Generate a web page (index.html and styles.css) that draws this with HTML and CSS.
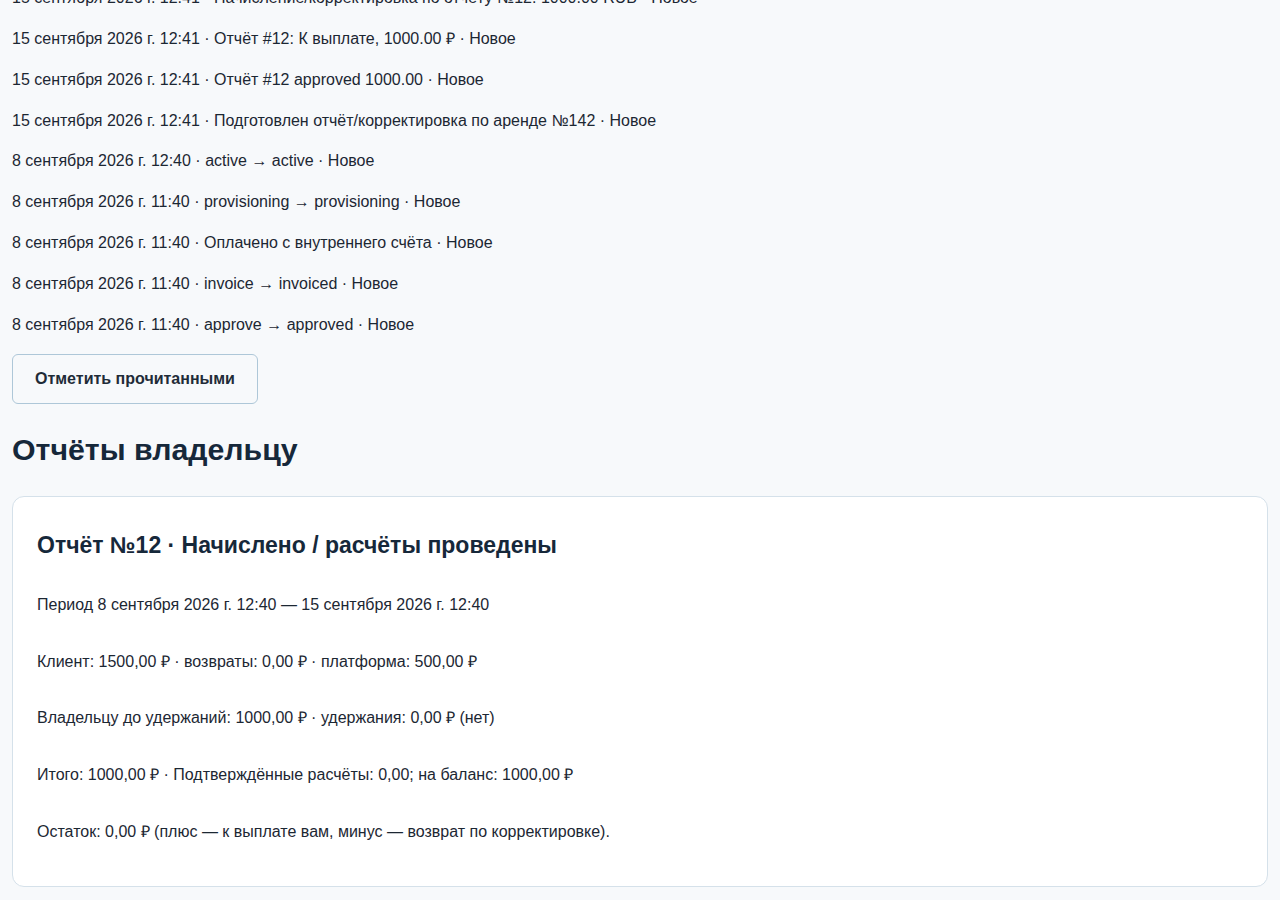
FILE: index.html
```html
<!DOCTYPE html>
<html lang="ru">
<head>
<meta charset="utf-8">
<title>Уведомления и отчёты</title>
<link rel="stylesheet" href="styles.css">
</head>
<body>
<main class="page">
  <section class="notices">
    <p class="notice">15 сентября 2026 г. 12:41 · Начисление/корректировка по отчёту №12: 1000.00 RUB · Новое</p>
    <p class="notice">15 сентября 2026 г. 12:41 · Отчёт #12: К выплате, 1000.00 ₽ · Новое</p>
    <p class="notice">15 сентября 2026 г. 12:41 · Отчёт #12 approved 1000.00 · Новое</p>
    <p class="notice">15 сентября 2026 г. 12:41 · Подготовлен отчёт/корректировка по аренде №142 · Новое</p>
    <p class="notice">8 сентября 2026 г. 12:40 · active → active · Новое</p>
    <p class="notice">8 сентября 2026 г. 11:40 · provisioning → provisioning · Новое</p>
    <p class="notice">8 сентября 2026 г. 11:40 · Оплачено с внутреннего счёта · Новое</p>
    <p class="notice">8 сентября 2026 г. 11:40 · invoice → invoiced · Новое</p>
    <p class="notice">8 сентября 2026 г. 11:40 · approve → approved · Новое</p>
    <button class="btn" type="button">Отметить прочитанными</button>
  </section>
  <h2 class="section-title">Отчёты владельцу</h2>
  <article class="card">
    <h3 class="card-title">Отчёт №12 · Начислено / расчёты проведены</h3>
    <div class="card-body">
      <p class="line">Период 8 сентября 2026 г. 12:40 — 15 сентября 2026 г. 12:40</p>
      <p class="line">Клиент: 1500,00 ₽ · возвраты: 0,00 ₽ · платформа: 500,00 ₽</p>
      <p class="line">Владельцу до удержаний: 1000,00 ₽ · удержания: 0,00 ₽ (нет)</p>
      <p class="line">Итого: 1000,00 ₽ · Подтверждённые расчёты: 0,00; на баланс: 1000,00 ₽</p>
      <p class="line">Остаток: 0,00 ₽ (плюс — к выплате вам, минус — возврат по корректировке).</p>
    </div>
  </article>
</main>
</body>
</html>
```
FILE: styles.css
```css
html, body {
  margin: 0;
  padding: 0;
  background: #f7f9fb;
  color: #1c2733;
  font-family: "Liberation Sans", Arial, sans-serif;
}
.page {
  padding: 0 12px 14px;
}
.notices {
  margin-top: -15px;
}
.notice {
  margin: 0 0 15.85px;
  font-size: 16px;
  line-height: 25px;
}
.btn {
  display: block;
  margin: 17px 0 0;
  padding: 15px 22px;
  background: transparent;
  border: 1px solid #aec7d8;
  border-radius: 6px;
  font-family: "Liberation Sans", Arial, sans-serif;
  font-size: 16px;
  font-weight: 700;
  line-height: 18px;
  color: #1f2c38;
}
.section-title {
  margin: 28px 0 28px;
  font-size: 30.3px;
  line-height: 36px;
  font-weight: 700;
  color: #16283a;
}
.card {
  background: #ffffff;
  border: 1px solid #d5e1ea;
  border-radius: 12px;
  padding: 24px 24px 43px;
}
.card-title {
  margin: 10px 0 0;
  font-size: 23px;
  line-height: 28px;
  font-weight: 700;
  color: #16283a;
}
.card-body {
  display: flex;
  flex-direction: column;
  gap: 34.75px;
  margin-top: 35px;
}
.line {
  margin: 0;
  font-size: 16px;
  line-height: 22px;
}
```
